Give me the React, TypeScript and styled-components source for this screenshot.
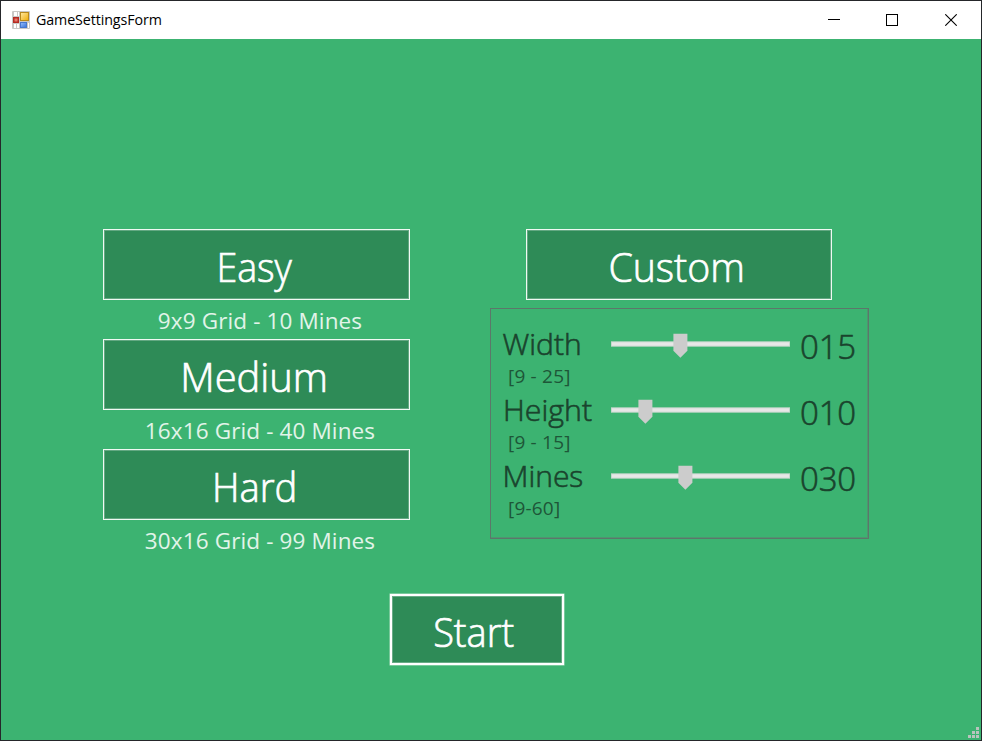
import React from "react";
import styled, { createGlobalStyle } from "styled-components";

const GlobalStyle = createGlobalStyle`
  *, *::before, *::after { box-sizing: border-box; }
  body { margin: 0; font-family: "Segoe UI", "Open Sans", "Noto Sans", sans-serif; }
`;

const Window = styled.div`
  position: relative;
  display: flex;
  flex-direction: column;
  width: 982px;
  height: 741px;
  border: 1px solid #25262a;
  background: #3cb371;
  overflow: hidden;
`;

const TitleBar = styled.header`
  display: flex;
  align-items: center;
  flex: 0 0 38px;
  padding: 0 1px 0 11px;
  background: #fff;
  color: #000;
`;

const Title = styled.span`
  flex: 1;
  height: 38px;
  margin-left: 6px;
  font-size: 15px;
  line-height: 36px;
  letter-spacing: -0.1px;
  transform: scaleX(0.95);
  transform-origin: left;
`;

const WindowButton = styled.button`
  display: flex;
  align-items: center;
  justify-content: center;
  width: 58.5px;
  height: 38px;
  padding: 0;
  border: 0;
  background: none;
`;

const Form = styled.main`
  display: flex;
  flex-direction: column;
  flex: 1;
  padding: 190px 112px 0 102px;
`;

const Columns = styled.div`
  display: flex;
  justify-content: space-between;
  align-items: flex-start;
`;

const Presets = styled.div`
  display: grid;
  grid-auto-rows: 110px;
  width: 307px;
`;

const Preset = styled.div`
  display: flex;
  flex-direction: column;
`;

const ModeButton = styled.button<{ $width?: number }>`
  display: block;
  width: ${(p) => p.$width ?? 307}px;
  height: 71px;
  padding: 5px 4px 0 0;
  border: 1px solid #f0f9f3;
  box-shadow: inset 0 0 0 1px #63a882;
  background: #2e8b57;
  color: #fff;
  font-family: inherit;
  font-size: 40px;
  font-weight: 300;
  -webkit-text-stroke: 0.7px currentColor;
  line-height: 62px;
  white-space: nowrap;
`;

/* Adjusts the horizontal scale of a label around its own origin. */
const Condensed = styled.span<{ $scale: number; $origin?: string }>`
  display: inline-block;
  transform: scaleX(${(p) => p.$scale});
  transform-origin: ${(p) => p.$origin ?? "center"};
`;

const Caption = styled.div`
  height: 39px;
  padding-left: 7px;
  color: #e2f4e9;
  font-size: 22.5px;
  line-height: 41px;
  letter-spacing: 0.13px;
  text-align: center;
  white-space: nowrap;
`;

const CustomColumn = styled.section`
  display: flex;
  flex-direction: column;
  width: 379px;
  gap: 8px;
`;

const CustomHead = styled.div`
  padding-left: 36px;
`;

const Options = styled.div`
  display: grid;
  grid-auto-rows: 66px;
  height: 231px;
  padding: 18px 0 0 12px;
  border: 1px solid #5c776a;
  box-shadow: inset -1px -1px 0 #4f9570;
  color: #1a432d;
`;

const Option = styled.div`
  display: grid;
  grid-template-columns: 108px 179px 1fr;
  align-items: start;
`;

const OptionName = styled.div`
  height: 34px;
  margin-left: -0.5px;
  font-size: 30px;
  font-weight: 300;
  -webkit-text-stroke: 0.6px currentColor;
  line-height: 33px;
  white-space: nowrap;
`;

const Range = styled.div`
  padding-left: 5px;
  color: #1e5638;
  font-size: 19px;
  line-height: 30px;
  letter-spacing: 0.2px;
  white-space: nowrap;
`;

const Slider = styled.div`
  height: 24px;
  margin-top: 6.6px;
`;

const Value = styled.div`
  padding-left: 10px;
  font-size: 33px;
  font-weight: 300;
  -webkit-text-stroke: 0.6px currentColor;
  line-height: 40px;
  letter-spacing: -0.2px;
`;

const StartButton = styled.button`
  width: 174px;
  height: 71px;
  margin: 35px 0 0 287px;
  padding: 5px 6px 0 0;
  border: 2px solid #fff;
  box-shadow: inset 0 0 0 1px #68ab86, 0 0 0 0.5px #b5e2c7;
  background: #2e8b57;
  color: #fff;
  font-family: inherit;
  font-size: 40px;
  font-weight: 300;
  -webkit-text-stroke: 0.7px currentColor;
  line-height: 60px;
`;

const SizeGrip = styled.svg`
  position: absolute;
  right: 1px;
  bottom: 1px;
`;

const presets = [
  { name: "Easy", scale: 0.94, detail: "9x9 Grid - 10 Mines" },
  { name: "Medium", scale: 0.996, detail: "16x16 Grid - 40 Mines" },
  { name: "Hard", scale: 0.955, detail: "30x16 Grid - 99 Mines" },
];

const options = [
  { name: "Width", scale: 1, range: "[9 - 25]", value: "015", thumb: 69.4 },
  { name: "Height", scale: 1.01, range: "[9 - 15]", value: "010", thumb: 34.4 },
  { name: "Mines", scale: 1, range: "[9-60]", value: "030", thumb: 74.4 },
];

function FormIcon() {
  return (
    <svg width="18" height="18" viewBox="0 0 18 18">
      <defs>
        <linearGradient id="gold" x1="0" y1="0" x2="1" y2="1">
          <stop offset="0" stopColor="#ffe69a" />
          <stop offset="1" stopColor="#f0b010" />
        </linearGradient>
        <linearGradient id="blue" x1="0" y1="0" x2="1" y2="1">
          <stop offset="0" stopColor="#8db8f8" />
          <stop offset="1" stopColor="#3f78da" />
        </linearGradient>
      </defs>
      <rect width="18" height="18" rx="1" fill="#c9c8c6" />
      <path d="M2 1h3v4H2zM6 1h1v4H6zM2 13h2v4H2zM5 13h2v4H5zM16 12h1v5h-1z" fill="#fff" />
      <rect x="8" y="1" width="9" height="9" fill="#b98a1c" />
      <rect x="9" y="2" width="7" height="7" fill="url(#gold)" />
      <rect x="1" y="6" width="6" height="6" fill="#b52a22" />
      <rect x="2.5" y="7.5" width="3" height="3" fill="#e8796b" />
      <rect x="8" y="11" width="7" height="6" fill="#4678cd" />
      <rect x="9" y="12" width="5" height="4" fill="url(#blue)" />
    </svg>
  );
}

const TrackSvg = styled.svg`
  display: block;
  overflow: visible;
`;

function TrackBar({ thumb }: { thumb: number }) {
  return (
    <TrackSvg width="179" height="24" viewBox="0 0 179 24">
      <rect x="0" y="7.3" width="179" height="5.4" fill="#c5d8cd" />
      <rect x="1" y="8.3" width="177" height="3.4" fill="#e7e7e7" />
      <path d={`M${thumb - 7} -0.2h14v17l-7 7l-7-7z`} fill="#ccc" />
    </TrackSvg>
  );
}

export default function App() {
  return (
    <>
      <GlobalStyle />
      <Window>
        <TitleBar>
          <FormIcon />
          <Title>GameSettingsForm</Title>
          <WindowButton aria-label="Minimize">
            <svg width="12" height="12" shapeRendering="crispEdges">
              <rect y="5" width="12" height="1" />
            </svg>
          </WindowButton>
          <WindowButton aria-label="Maximize">
            <svg width="12" height="12" shapeRendering="crispEdges">
              <rect x="0.5" y="0.5" width="11" height="11" fill="none" stroke="#000" />
            </svg>
          </WindowButton>
          <WindowButton aria-label="Close">
            <svg width="12" height="12">
              <path d="M0.3 0.3L11.7 11.7M11.7 0.3L0.3 11.7" stroke="#000" strokeWidth="1.1" />
            </svg>
          </WindowButton>
        </TitleBar>
        <Form>
          <Columns>
            <Presets>
              {presets.map((p) => (
                <Preset key={p.name}>
                  <ModeButton>
                    <Condensed $scale={p.scale}>{p.name}</Condensed>
                  </ModeButton>
                  <Caption>{p.detail}</Caption>
                </Preset>
              ))}
            </Presets>
            <CustomColumn>
              <CustomHead>
                <ModeButton $width={306}>
                  <Condensed $scale={0.98}>Custom</Condensed>
                </ModeButton>
              </CustomHead>
              <Options>
                {options.map((o) => (
                  <Option key={o.name}>
                    <div>
                      <OptionName>
                        <Condensed $scale={o.scale} $origin="left">
                          {o.name}
                        </Condensed>
                      </OptionName>
                      <Range>{o.range}</Range>
                    </div>
                    <Slider>
                      <TrackBar thumb={o.thumb} />
                    </Slider>
                    <Value>{o.value}</Value>
                  </Option>
                ))}
              </Options>
            </CustomColumn>
          </Columns>
          <StartButton>
            <Condensed $scale={0.95}>Start</Condensed>
          </StartButton>
        </Form>
        <SizeGrip width="12" height="12" viewBox="0 0 12 12" fill="#b9c4bd">
          <path d="M8 0h3v3H8zM4 4h3v3H4zM8 4h3v3H8zM0 8h3v3H0zM4 8h3v3H4zM8 8h3v3H8z" />
        </SizeGrip>
      </Window>
    </>
  );
}
